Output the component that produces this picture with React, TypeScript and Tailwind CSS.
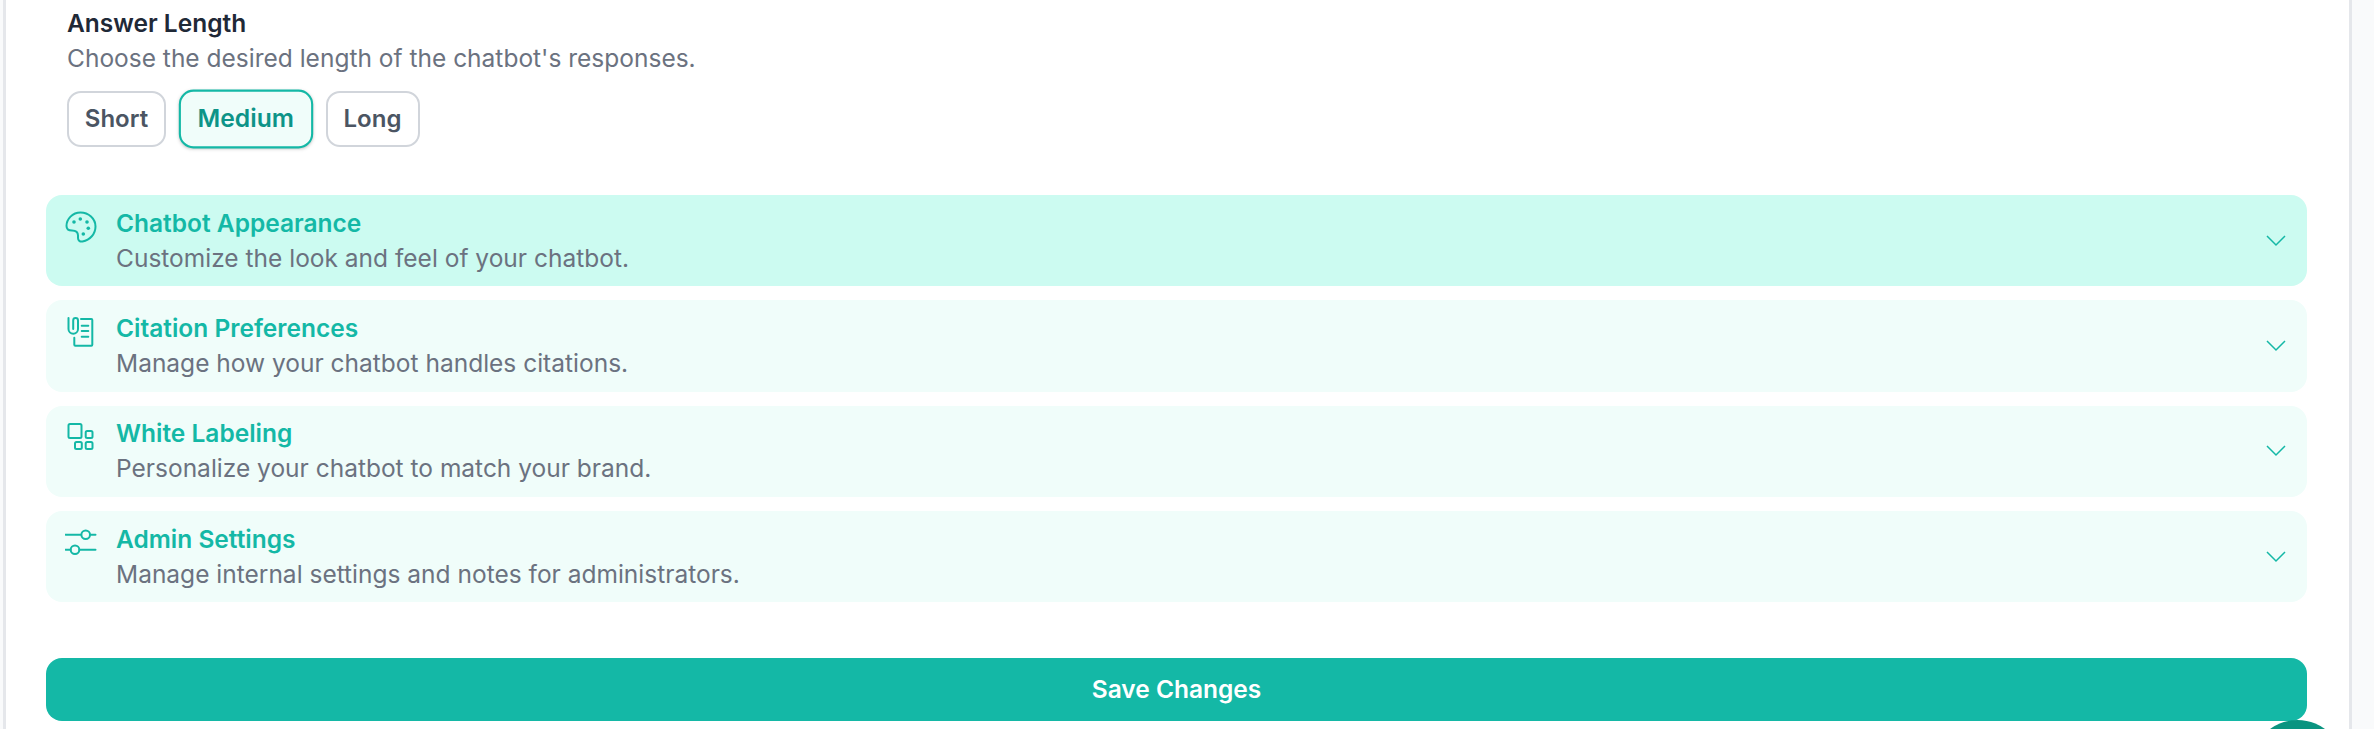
import { ReactNode } from "react";

const PaletteIcon = () => (
  <svg viewBox="0 0 32 32" className="h-[32px] w-[32px]" fill="none" stroke="currentColor" strokeWidth="2" strokeLinecap="round" strokeLinejoin="round">
    <path d="M15.500 1.500C7.500 1.500 1.500 8 1.500 15c0 3 2.500 4.500 5.500 4.500 4 0 6 1.500 6 5V27c0 2.500 2 4 4.500 3.500C25 29 30.500 23 30.500 15.500 30.500 7.500 23.500 1.500 15.500 1.500Z" />
    <circle cx="9" cy="11" r="1.800" fill="currentColor" stroke="none" />
    <circle cx="15.300" cy="8" r="1.800" fill="currentColor" stroke="none" />
    <circle cx="22" cy="11" r="1.800" fill="currentColor" stroke="none" />
    <circle cx="23.300" cy="17.300" r="1.800" fill="currentColor" stroke="none" />
    <circle cx="18.300" cy="23" r="1.800" fill="currentColor" stroke="none" />
  </svg>
);

const CitationIcon = () => (
  <svg viewBox="0 0 32 32" className="h-[32px] w-[32px]" fill="none" stroke="currentColor" strokeWidth="2" strokeLinecap="round" strokeLinejoin="round">
    <path d="M3.500 2v11a4.750 4.750 0 0 0 9.500 0V4.500a2.400 2.400 0 0 0-4.800 0V13" />
    <path d="M16 3h10.300a1 1 0 0 1 1 1v24.700a1 1 0 0 1-1 1H10.300a1 1 0 0 1-1-1v-7" />
    <path d="M16.700 9.700h6.600M16.700 15h6.600M16.700 20.700h6.600" />
  </svg>
);

const LabelIcon = () => (
  <svg viewBox="0 0 32 32" className="h-[32px] w-[32px]" fill="none" stroke="currentColor" strokeWidth="2" strokeLinejoin="round">
    <rect x="3.500" y="3" width="13" height="14" rx="1.500" />
    <rect x="20.700" y="10" width="6.800" height="7" rx="1.500" />
    <rect x="10" y="21" width="6.800" height="7" rx="1.500" />
    <rect x="20.700" y="21" width="6.800" height="7" rx="1.500" />
  </svg>
);

const SlidersIcon = () => (
  <svg viewBox="0 0 32 32" className="h-[32px] w-[32px]" fill="none" stroke="currentColor" strokeWidth="2" strokeLinecap="round">
    <path d="M.5 7.700H16M25 7.700h5.500M.5 22.700h5M14.500 22.700h16" />
    <circle cx="20.700" cy="7.700" r="4.300" />
    <circle cx="10" cy="22.700" r="4.300" />
  </svg>
);

const Chevron = () => (
  <svg viewBox="0 0 20 12" className="h-[12px] w-[20px] text-[#14b8a6]" fill="none" stroke="currentColor" strokeWidth="1.500">
    <path d="M1 1l9 9 9-9" />
  </svg>
);

function Row({ icon, title, text, active }: { icon: ReactNode; title: string; text: string; active?: boolean }) {
  return (
    <div className={`flex h-[91.33px] items-center justify-between rounded-[16px] pl-[19px] pr-[21px] ${active ? "bg-[#ccfbf1]" : "bg-[#f0fdfa]"}`}>
      <div className="flex items-start gap-[19px]">
        <div className="mt-[4px] text-[#14b8a6]">{icon}</div>
        <div>
          <div className="text-[24.5px] leading-[33px] font-semibold text-[#14b8a6]">{title}</div>
          <div className="mt-[1px] text-[24.5px] leading-[34px] text-[#6b7280]">{text}</div>
        </div>
      </div>
      <Chevron />
    </div>
  );
}

export default function App() {
  return (
    <div className="relative h-[729px] w-full overflow-hidden bg-[#f9fafb] font-['Inter',sans-serif]">
      <div className="ml-[3px] mr-[22px] h-full border-x-[3px] border-[#e5e7eb] bg-white pl-[40px] pr-[42px]">
        <div className="pl-[21px]">
          <div className="pt-[5px] text-[24.5px] leading-[36px] font-semibold text-[#1f2937]">Answer Length</div>
          <div className="mt-[-1px] text-[24.5px] leading-[36px] text-[#6b7280]">Choose the desired length of the chatbot's responses.</div>
          <div className="mt-[15px] flex gap-[15.5px]">
            <button className="h-[56px] w-[99px] rounded-[14px] border-2 border-[#d1d5db] bg-white text-[24px] font-semibold text-[#4b5563]">Short</button>
            <button className="h-[56px] w-[127.5px] scale-105 rounded-[14px] border-2 border-[#14b8a6] bg-[#f0fdfa] text-[23.5px] font-semibold text-[#0d9488] shadow-sm">Medium</button>
            <button className="ml-[1px] h-[56px] w-[94px] rounded-[14px] border-2 border-[#d1d5db] bg-white text-[24px] font-semibold text-[#4b5563]">Long</button>
          </div>
        </div>
        <div className="mt-[48px] flex flex-col gap-[14px]">
          <Row icon={<PaletteIcon />} title="Chatbot Appearance" text="Customize the look and feel of your chatbot." active />
          <Row icon={<CitationIcon />} title="Citation Preferences" text="Manage how your chatbot handles citations." />
          <Row icon={<LabelIcon />} title="White Labeling" text="Personalize your chatbot to match your brand." />
          <Row icon={<SlidersIcon />} title="Admin Settings" text="Manage internal settings and notes for administrators." />
        </div>
        <button className="mt-[56px] h-[63px] w-full rounded-[16px] bg-[#14b8a6] text-[24.5px] font-semibold text-white">Save Changes</button>
      </div>
      <div className="absolute left-[2251px] top-[720px] h-[93px] w-[93px] rounded-full bg-[#0a9480]" />
    </div>
  );
}
